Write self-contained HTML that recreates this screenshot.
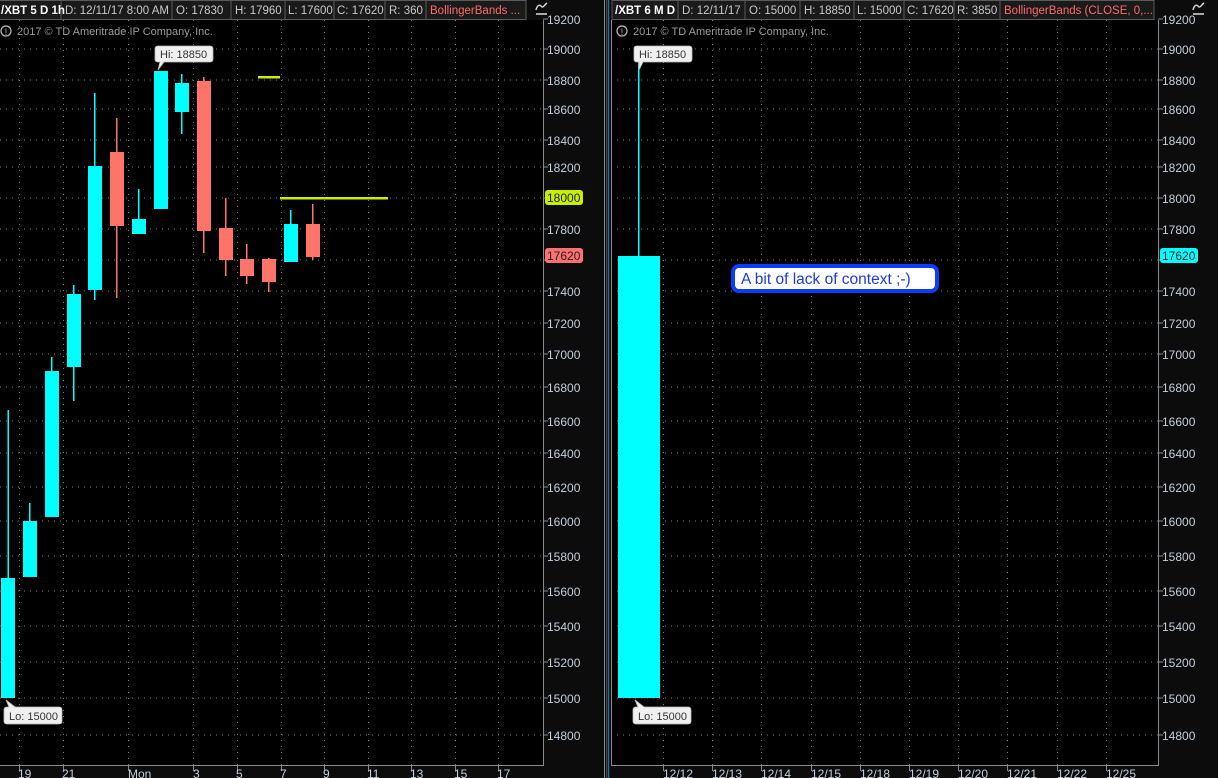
<!DOCTYPE html>
<html><head><meta charset="utf-8"><style>
html,body{margin:0;padding:0;background:#0c0c0c;width:1218px;height:778px;overflow:hidden}
svg{display:block}
text{font-family:"Liberation Sans",sans-serif}
</style></head><body>
<svg width="1218" height="778" xmlns="http://www.w3.org/2000/svg">
<rect width="1218" height="778" fill="#0c0c0c"/>
<rect x="0" y="20" width="543" height="745" fill="#000"/>
<rect x="611" y="20" width="547" height="745" fill="#000"/>
<g fill="#1a1a1a" stroke="#5a5a5a" stroke-width="1">
<rect x="-1" y="0.5" width="62" height="19"/><rect x="61" y="0.5" width="111" height="19"/><rect x="172" y="0.5" width="59" height="19"/><rect x="231" y="0.5" width="54" height="19"/><rect x="285" y="0.5" width="49" height="19"/><rect x="334" y="0.5" width="51" height="19"/><rect x="385" y="0.5" width="41" height="19"/><rect x="426" y="0.5" width="100" height="19"/>
<rect x="612" y="0.5" width="66" height="19"/><rect x="678" y="0.5" width="67" height="19"/><rect x="745" y="0.5" width="55" height="19"/><rect x="800" y="0.5" width="54" height="19"/><rect x="854" y="0.5" width="50" height="19"/><rect x="904" y="0.5" width="50" height="19"/><rect x="954" y="0.5" width="46" height="19"/><rect x="1000" y="0.5" width="154" height="19"/>
</g>
<g font-size="11.5" fill="#c8c8c8">
<text x="1" y="14" font-weight="bold" fill="#fff" font-size="11.5">/XBT 5 D 1h</text>
<text x="65" y="14">D: 12/11/17 8:00 AM</text>
<text x="176" y="14">O: 17830</text>
<text x="235" y="14">H: 17960</text>
<text x="288" y="14">L: 17600</text>
<text x="337" y="14">C: 17620</text>
<text x="389" y="14">R: 360</text>
<text x="430" y="14" fill="#ff6b6b">BollingerBands ...</text>
<text x="615" y="14" font-weight="bold" fill="#fff">/XBT 6 M D</text>
<text x="682" y="14">D: 12/11/17</text>
<text x="749" y="14">O: 15000</text>
<text x="804" y="14">H: 18850</text>
<text x="857" y="14">L: 15000</text>
<text x="907" y="14">C: 17620</text>
<text x="957" y="14">R: 3850</text>
<text x="1004" y="14" fill="#ff6b6b">BollingerBands (CLOSE, 0,...</text>
</g>
<g stroke="#ddd" stroke-width="1.4" fill="none">
<path d="M536 10 C537 6 539 4 541 6 C543 9 544 5 547 3 M536 14 H547"/>
<path d="M1193 10 C1194 6 1196 4 1198 6 C1200 9 1201 5 1204 3 M1193 14 H1204"/>
</g>
<g font-size="11" fill="#9a9a9a">
<circle cx="6" cy="31" r="5" fill="none" stroke="#bbb" stroke-width="1.2"/><text x="4.8" y="35" font-size="9" fill="#bbb">!</text>
<text x="17" y="35">2017 © TD Ameritrade IP Company, Inc.</text>
<circle cx="622" cy="31" r="5" fill="none" stroke="#bbb" stroke-width="1.2"/><text x="620.8" y="35" font-size="9" fill="#bbb">!</text>
<text x="633" y="35">2017 © TD Ameritrade IP Company, Inc.</text>
</g>
<g stroke="#7a7a7a" stroke-width="1" stroke-dasharray="1 5" fill="none">
<path d="M0 49H543M0 80H543M0 109H543M0 140H543M0 167H543M0 198H543M0 229H543M0 260H543M0 291H543M0 323H543M0 354H543M0 387H543M0 421H543M0 453H543M0 487H543M0 521H543M0 556H543M0 591H543M0 626H543M0 662H543M0 698H543M0 735H543"/>
<path d="M19.5 20V765M63.5 20V765M128.5 20V765M193.5 20V765M237.5 20V765M281.5 20V765M324.5 20V765M368.5 20V765M411.5 20V765M455.5 20V765M498.5 20V765"/>
<path transform="translate(611 0)" d="M0 49H547M0 80H547M0 109H547M0 140H547M0 167H547M0 198H547M0 229H547M0 260H547M0 291H547M0 323H547M0 354H547M0 387H547M0 421H547M0 453H547M0 487H547M0 521H547M0 556H547M0 591H547M0 626H547M0 662H547M0 698H547M0 735H547"/>
<path d="M663.5 20V765M712.5 20V765M761.5 20V765M811.5 20V765M860.5 20V765M909.5 20V765M958.5 20V765M1007.5 20V765M1057.5 20V765M1106.5 20V765"/>
</g>
<g stroke="#8a8a8a" stroke-width="1" fill="none">
<path d="M543.5 20V765.5H0"/>
<path d="M611.5 20V765.5H1158.5V20"/>
<path d="M604.5 0V778"/><path d="M606.5 0V778" stroke="#444"/>
</g>
<path d="M608.5 0V778" stroke="#2a6a9a" stroke-width="1.5"/>
<g stroke="#8a8a8a">
<path d="M543 19H548M543 49H548M543 80H548M543 109H548M543 140H548M543 167H548M543 198H548M543 229H548M543 260H548M543 291H548M543 323H548M543 354H548M543 387H548M543 421H548M543 453H548M543 487H548M543 521H548M543 556H548M543 591H548M543 626H548M543 662H548M543 698H548M543 735H548"/>
<path transform="translate(615 0)" d="M543 19H548M543 49H548M543 80H548M543 109H548M543 140H548M543 167H548M543 198H548M543 229H548M543 260H548M543 291H548M543 323H548M543 354H548M543 387H548M543 421H548M543 453H548M543 487H548M543 521H548M543 556H548M543 591H548M543 626H548M543 662H548M543 698H548M543 735H548"/>
<path d="M19.5 765V771M63.5 765V771M128.5 765V771M193.5 765V771M237.5 765V771M281.5 765V771M324.5 765V771M368.5 765V771M411.5 765V771M455.5 765V771M498.5 765V771"/>
<path d="M663.5 765V771M712.5 765V771M761.5 765V771M811.5 765V771M860.5 765V771M909.5 765V771M958.5 765V771M1007.5 765V771M1057.5 765V771M1106.5 765V771"/>
</g>
<g font-size="12" fill="#c5cedb">
<text x="547" y="24">19200</text><text x="547" y="54">19000</text><text x="547" y="85">18800</text><text x="547" y="114">18600</text><text x="547" y="145">18400</text><text x="547" y="172">18200</text><text x="547" y="234">17800</text><text x="547" y="296">17400</text><text x="547" y="328">17200</text><text x="547" y="359">17000</text><text x="547" y="392">16800</text><text x="547" y="426">16600</text><text x="547" y="458">16400</text><text x="547" y="492">16200</text><text x="547" y="526">16000</text><text x="547" y="561">15800</text><text x="547" y="596">15600</text><text x="547" y="631">15400</text><text x="547" y="667">15200</text><text x="547" y="703">15000</text><text x="547" y="740">14800</text>
<g transform="translate(615 0)">
<text x="547" y="24">19200</text><text x="547" y="54">19000</text><text x="547" y="85">18800</text><text x="547" y="114">18600</text><text x="547" y="145">18400</text><text x="547" y="172">18200</text><text x="547" y="203">18000</text><text x="547" y="234">17800</text><text x="547" y="296">17400</text><text x="547" y="328">17200</text><text x="547" y="359">17000</text><text x="547" y="392">16800</text><text x="547" y="426">16600</text><text x="547" y="458">16400</text><text x="547" y="492">16200</text><text x="547" y="526">16000</text><text x="547" y="561">15800</text><text x="547" y="596">15600</text><text x="547" y="631">15400</text><text x="547" y="667">15200</text><text x="547" y="703">15000</text><text x="547" y="740">14800</text>
</g>
<text x="18" y="778">19</text><text x="62" y="778">21</text><text x="128" y="778">Mon</text><text x="193" y="778">3</text><text x="236" y="778">5</text><text x="280" y="778">7</text><text x="323" y="778">9</text><text x="367" y="778">11</text><text x="410" y="778">13</text><text x="454" y="778">15</text><text x="497" y="778">17</text>
<text x="663" y="778">12/12</text><text x="712" y="778">12/13</text><text x="761" y="778">12/14</text><text x="811" y="778">12/15</text><text x="860" y="778">12/18</text><text x="909" y="778">12/19</text><text x="958" y="778">12/20</text><text x="1007" y="778">12/21</text><text x="1057" y="778">12/22</text><text x="1106" y="778">12/25</text>
</g>
<rect x="545" y="190" width="38" height="15" rx="3" fill="#c6f000"/><text x="547" y="202" font-size="12" fill="#222">18000</text>
<rect x="545" y="248" width="38" height="15" rx="3" fill="#ff7070"/><text x="547" y="260" font-size="12" fill="#222">17620</text>
<rect x="1160" y="248" width="38" height="15" rx="3" fill="#00ffff"/><text x="1162" y="260" font-size="12" fill="#222">17620</text>
<g fill="#c6f000"><rect x="258" y="76" width="22" height="2.5"/><rect x="280" y="197" width="108" height="2.5"/></g>
<g fill="#00ffff">
<rect x="7.5" y="410" width="1.5" height="170"/><rect x="1" y="578" width="14" height="120"/>
<rect x="29" y="503" width="1.5" height="20"/><rect x="23" y="521" width="14" height="56"/>
<rect x="51" y="357" width="1.5" height="16"/><rect x="45" y="371" width="14" height="146"/>
<rect x="73" y="285" width="1.5" height="116"/><rect x="67" y="294" width="14" height="73"/>
<rect x="94" y="93" width="1.5" height="207"/><rect x="88" y="166" width="14" height="124"/>
<rect x="138" y="189" width="1.5" height="32"/><rect x="132" y="219" width="14" height="15"/>
<rect x="154" y="71" width="14" height="138"/>
<rect x="181" y="74" width="1.5" height="60"/><rect x="175" y="83" width="14" height="29"/>
<rect x="290" y="210" width="1.5" height="16"/><rect x="284" y="224" width="14" height="38"/>
<rect x="638" y="60" width="1.5" height="198"/><rect x="618" y="256" width="42" height="442"/>
</g>
<g fill="#ff7468">
<rect x="116" y="118" width="1.5" height="180"/><rect x="110" y="152" width="14" height="74"/>
<rect x="203" y="77" width="1.5" height="176"/><rect x="197" y="81" width="14" height="150"/>
<rect x="225" y="198" width="1.5" height="78"/><rect x="219" y="228" width="14" height="32"/>
<rect x="246" y="244" width="1.5" height="40"/><rect x="240" y="259" width="14" height="17"/>
<rect x="268" y="258" width="1.5" height="34"/><rect x="262" y="259" width="14" height="23"/>
<rect x="312" y="204" width="1.5" height="56"/><rect x="306" y="224" width="14" height="33"/>
</g>
<g fill="#f0f0f0" stroke="#bbb" stroke-width="0.8">
<path d="M158 46h52q3 0 3 3v10q0 3-3 3h-46l-6 8 2-8h-2q-3 0-3-3v-10q0-3 3-3z"/>
<path d="M7 707h2l-3-7 9 7h44q3 0 3 3v11q0 3-3 3h-52q-3 0-3-3v-11q0-3 3-3z"/>
<path d="M637 46h52q3 0 3 3v10q0 3-3 3h-46l-4 8 0-8h-2q-3 0-3-3v-10q0-3 3-3z"/>
<path d="M636 707h2l-3-7 9 7h44q3 0 3 3v11q0 3-3 3h-52q-3 0-3-3v-11q0-3 3-3z"/>
</g>
<g font-size="11" fill="#333">
<text x="160" y="58">Hi: 18850</text><text x="9" y="720">Lo: 15000</text>
<text x="639" y="58">Hi: 18850</text><text x="638" y="720">Lo: 15000</text>
</g>
<rect x="733" y="266" width="204" height="25" rx="6" fill="#fff" stroke="#0b3cff" stroke-width="4"/>
<text x="741" y="284" font-size="15.5" fill="#1a3ce0">A bit of lack of context ;-)</text>
</svg>
</body></html>
